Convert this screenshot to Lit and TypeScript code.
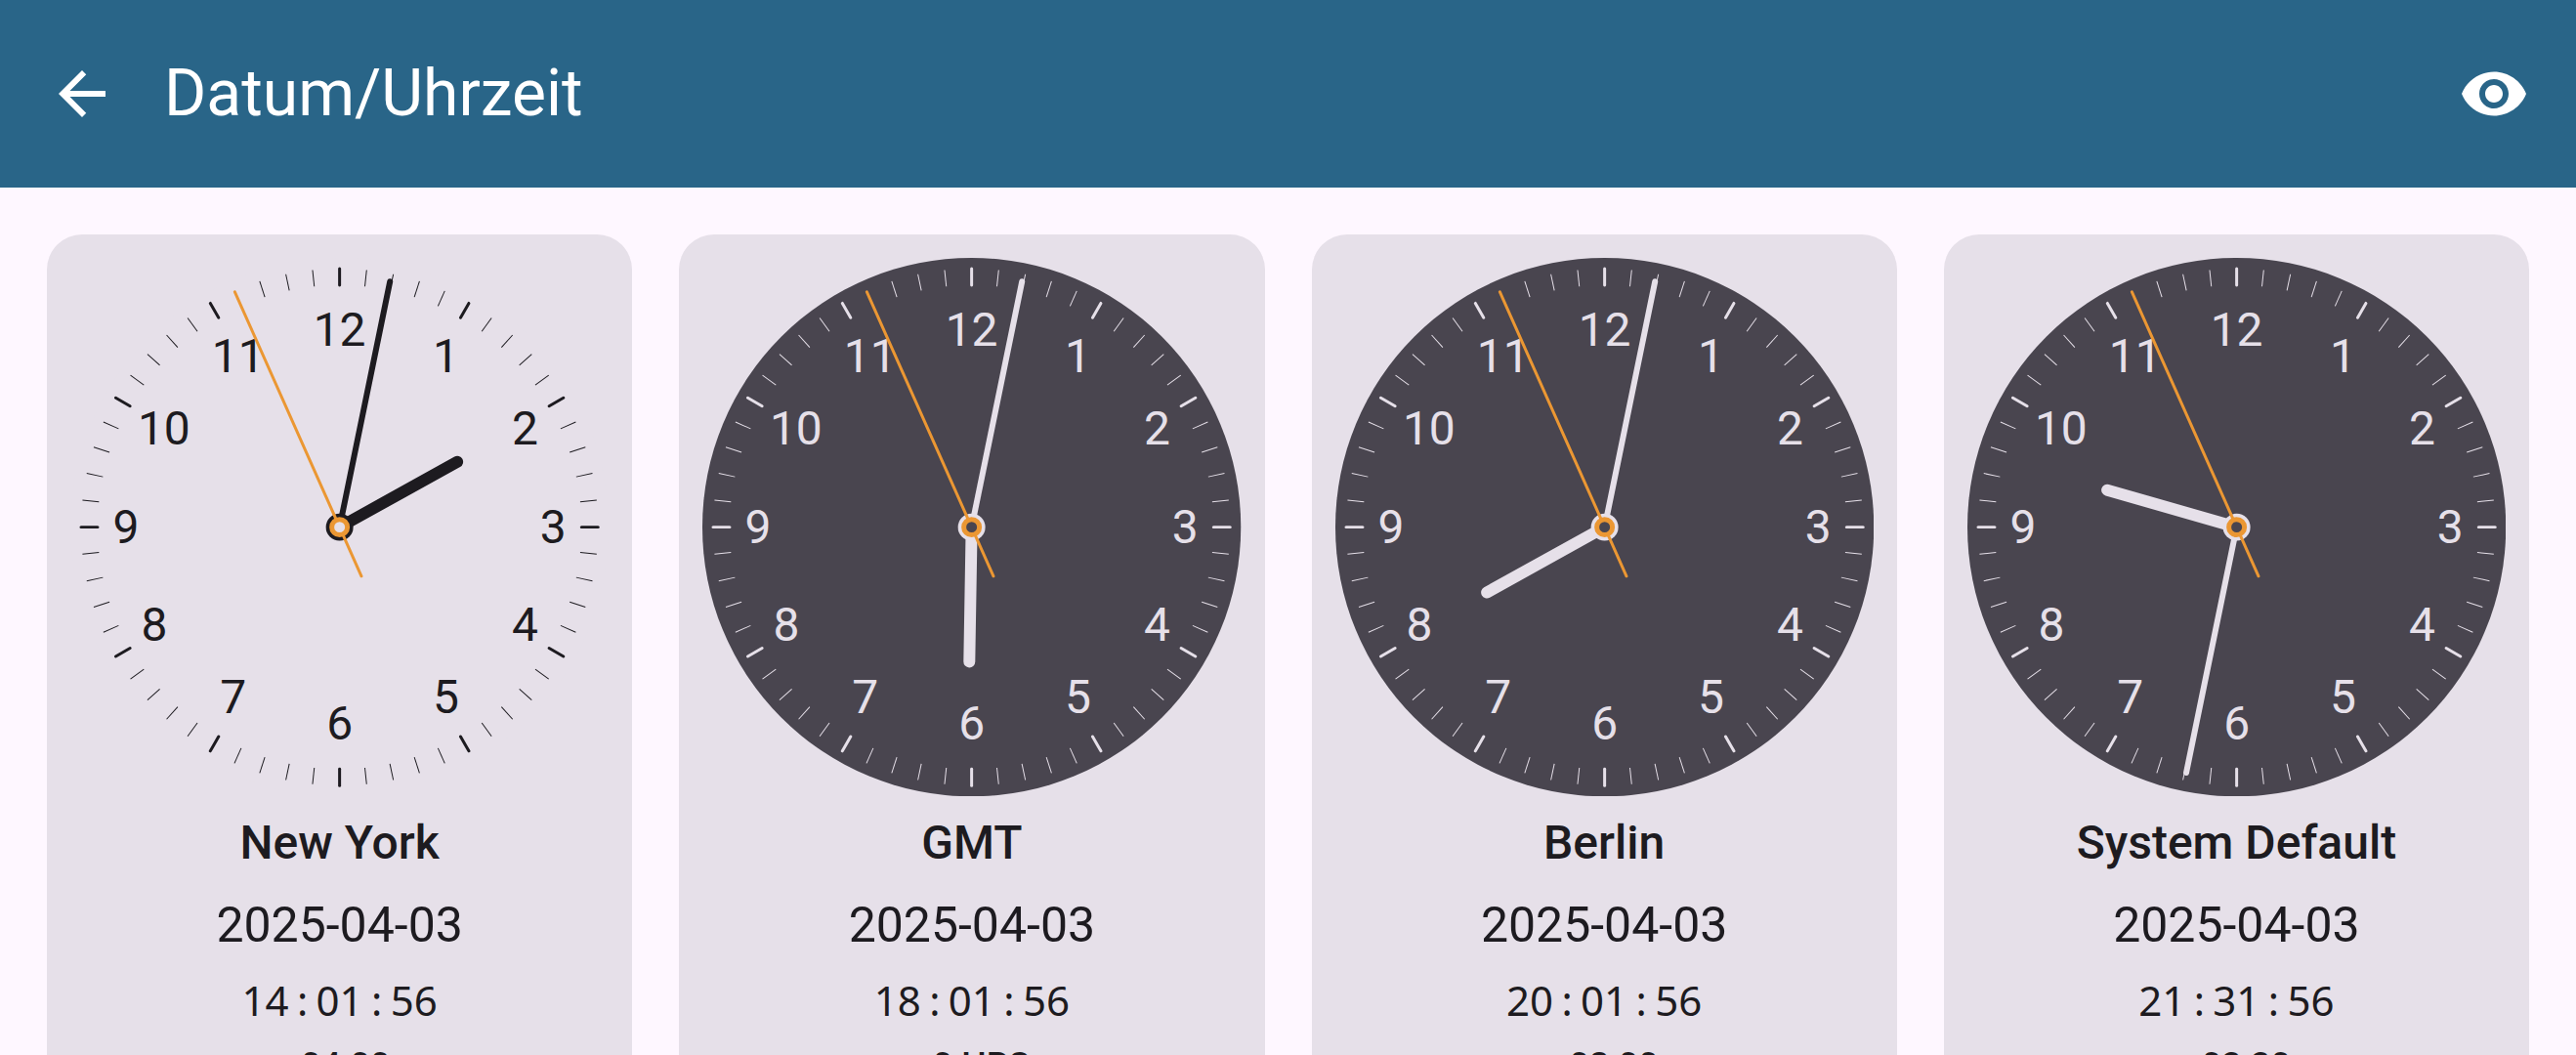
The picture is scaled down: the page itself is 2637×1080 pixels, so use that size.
import { LitElement, html, svg, css } from "lit";
import { customElement, property } from "lit/decorators.js";

interface Zone {
  name: string;
  date: string;
  time: [number, number, number];
  offset: string;
  day: boolean;
}

const ZONES: Zone[] = [
  { name: "New York", date: "2025-04-03", time: [14, 1, 56], offset: "-04:00", day: true },
  { name: "GMT", date: "2025-04-03", time: [18, 1, 56], offset: "±0 HRS", day: false },
  { name: "Berlin", date: "2025-04-03", time: [20, 1, 56], offset: "+02:00", day: false },
  { name: "System Default", date: "2025-04-03", time: [21, 31, 56], offset: "+03:30", day: false },
];

const pad = (n: number) => String(n).padStart(2, "0");

@customElement("clock-face")
class ClockFace extends LitElement {
  @property({ attribute: false }) time: [number, number, number] = [0, 0, 0];
  @property({ type: Boolean, reflect: true }) day = false;

  static styles = css`
    :host {
      display: block;
      --face: #49454f;
      --ink: #e6e0e9;
    }
    :host([day]) {
      --face: #e6e0e9;
      --ink: #1d1b20;
    }
    svg {
      display: block;
      width: 100%;
      height: auto;
    }
    .face {
      fill: var(--face);
    }
    .tick,
    .hand {
      stroke: var(--ink);
      stroke-linecap: round;
    }
    .tick {
      stroke-width: 1;
      stroke-linecap: butt;
    }
    .tick.hour {
      stroke-width: 3;
      stroke-linecap: round;
    }
    .numeral {
      fill: var(--ink);
      font: 400 48px/1 Roboto, sans-serif;
      text-anchor: middle;
    }
    .hand.hour {
      stroke-width: 12;
    }
    .hand.minute {
      stroke-width: 6;
    }
    .second {
      stroke: #eb9733;
      stroke-width: 3;
      stroke-linecap: round;
    }
    .hub {
      fill: var(--ink);
    }
    .ring {
      fill: var(--face);
      stroke: #eb9733;
      stroke-width: 5;
    }
  `;

  render() {
    const [h, m, s] = this.time;
    const minutes = m + s / 60;
    const hourAngle = ((h % 12) + minutes / 60) * 30;
    const ticks = Array.from({ length: 60 }, (_, i) => i);
    const numerals = Array.from({ length: 12 }, (_, i) => i + 1);
    return html`
      <svg viewBox="-276 -276 552 552" role="img" aria-label="${pad(h)}:${pad(m)}:${pad(s)}">
        <circle class="face" r="276"></circle>
        ${ticks.map(
          (i) => svg`<line class="tick ${i % 5 === 0 ? "hour" : ""}" y1="-265" y2="-248"
            transform="rotate(${i * 6})"></line>`,
        )}
        ${numerals.map((n) => {
          const a = (n * Math.PI) / 6;
          // Two-digit numerals sit closer to the centre so that they clear the ticks.
          const reach = n >= 10 ? 208 : 219;
          return svg`<text class="numeral" x="${Math.round(Math.sin(a) * reach)}"
            y="${Math.round(-Math.cos(a) * 202) + 16}">${n}</text>`;
        })}
        <line class="hand hour" y2="-138" transform="rotate(${hourAngle})"></line>
        <line class="hand minute" y2="-257" transform="rotate(${minutes * 6})"></line>
        <circle class="hub" r="14"></circle>
        <line class="second" y1="55" y2="-264" transform="rotate(${s * 6})"></line>
        <circle class="ring" r="8"></circle>
      </svg>
    `;
  }
}

@customElement("zone-card")
class ZoneCard extends LitElement {
  @property({ attribute: false }) zone!: Zone;

  static styles = css`
    :host {
      display: flex;
      flex-direction: column;
      align-items: center;
      box-sizing: border-box;
      min-width: 0;
      padding: 24px;
      border-radius: 36px;
      background: #e6e0e9;
      color: #1d1b20;
      font-family: Roboto, sans-serif;
      text-align: center;
    }
    clock-face {
      align-self: stretch;
    }
    h2,
    p {
      margin: 0;
    }
    h2 {
      margin-top: 12px;
      font-size: 48px;
      line-height: 72px;
      font-weight: 500;
    }
    .date {
      margin-top: 12px;
      font-size: 50px;
      line-height: 72px;
    }
    .time {
      display: flex;
      margin-top: 12px;
      font-family: "Noto Sans", sans-serif;
      font-size: 42px;
      line-height: 58px;
    }
    .colon {
      width: 28px;
    }
    .offset {
      margin-top: 14px;
      font-size: 36px;
      line-height: 48px;
      font-weight: 500;
    }
  `;

  render() {
    const { name, date, time, offset, day } = this.zone;
    const [h, m, s] = time.map(pad);
    return html`
      <clock-face .time=${time} ?day=${day}></clock-face>
      <h2>${name}</h2>
      <p class="date">${date}</p>
      <p class="time">
        <span>${h}</span><span class="colon">:</span><span>${m}</span><span class="colon">:</span
        ><span>${s}</span>
      </p>
      <p class="offset">${offset}</p>
    `;
  }
}

@customElement("app-root")
class AppRoot extends LitElement {
  static styles = css`
    :host {
      display: flex;
      flex-direction: column;
      box-sizing: border-box;
      height: 100vh;
      overflow: hidden;
      background: #fef7ff;
      font-family: Roboto, sans-serif;
    }
    header {
      display: flex;
      flex: none;
      align-items: center;
      gap: 48px;
      height: 192px;
      padding: 0 48px;
      background: #296588;
      color: #fff;
    }
    h1 {
      flex: 1;
      margin: 0;
      font-size: 66px;
      line-height: 84px;
      font-weight: 400;
    }
    button {
      display: flex;
      flex: none;
      padding: 0;
      border: 0;
      background: none;
      color: inherit;
      cursor: pointer;
    }
    svg {
      width: 72px;
      height: 72px;
      fill: currentColor;
    }
    main {
      display: grid;
      grid-template-columns: repeat(4, minmax(0, 1fr));
      gap: 48px;
      padding: 48px;
    }
  `;

  render() {
    return html`
      <header>
        <button type="button" aria-label="Zurück">
          <svg viewBox="0 0 24 24">
            <path d="M20 11H7.83l5.59-5.59L12 4l-8 8 8 8 1.41-1.41L7.83 13H20v-2z"></path>
          </svg>
        </button>
        <h1>Datum/Uhrzeit</h1>
        <button type="button" aria-label="Anzeigen">
          <svg viewBox="0 0 24 24">
            <path
              d="M12 4.5C7 4.5 2.73 7.61 1 12c1.73 4.39 6 7.5 11 7.5s9.27-3.11 11-7.5c-1.73-4.39-6-7.5-11-7.5zM12 17c-2.76 0-5-2.24-5-5s2.24-5 5-5 5 2.24 5 5-2.24 5-5 5zm0-8c-1.66 0-3 1.34-3 3s1.34 3 3 3 3-1.34 3-3-1.34-3-3-3z"
            ></path>
          </svg>
        </button>
      </header>
      <main>${ZONES.map((zone) => html`<zone-card .zone=${zone}></zone-card>`)}</main>
    `;
  }
}
